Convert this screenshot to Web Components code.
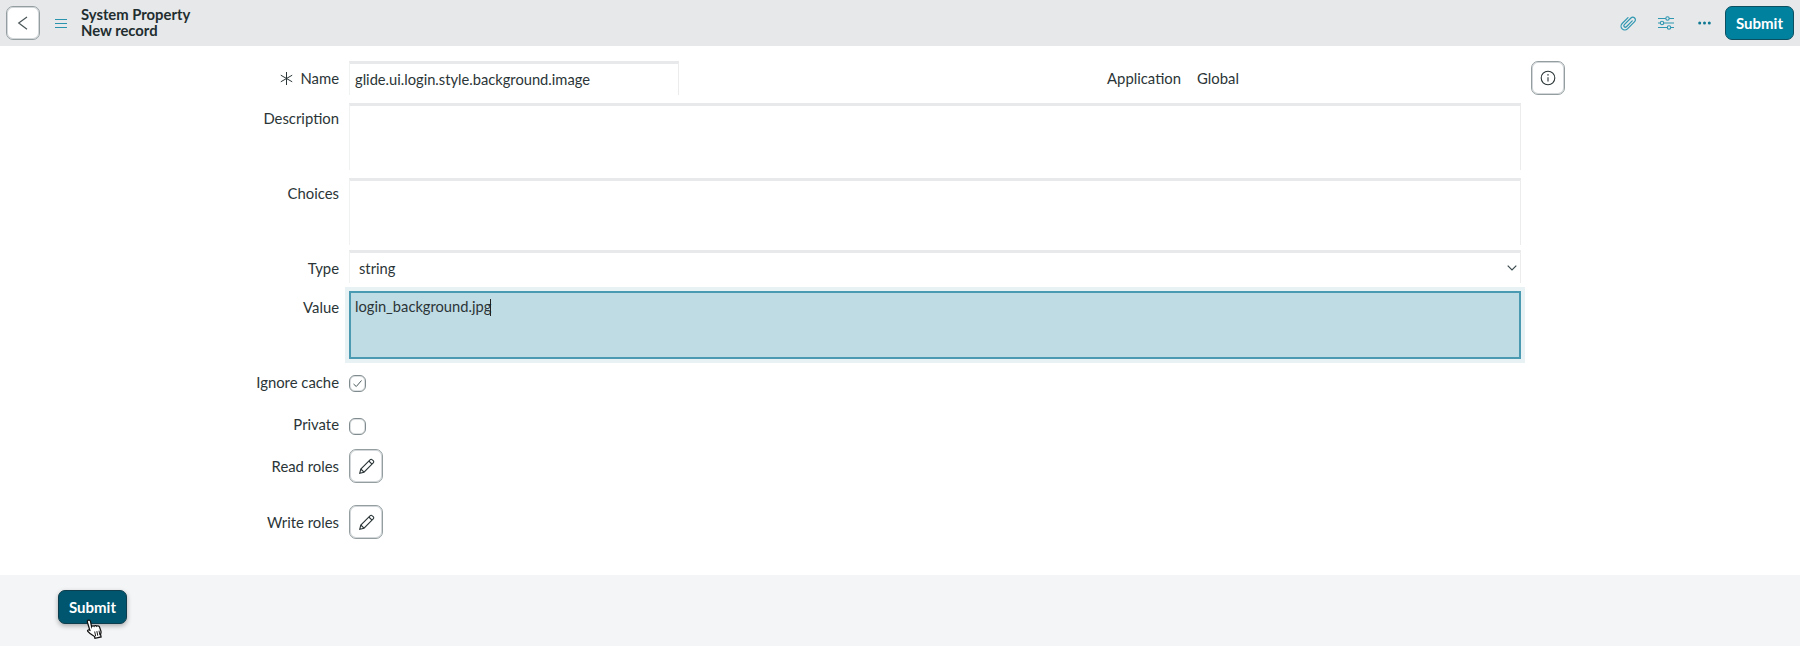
<!DOCTYPE html>
<html>
<head>
<meta charset="utf-8">
<title>System Property</title>
<style>
  html, body { margin: 0; height: 100%; }
  body { font-family: Lato, "Open Sans", sans-serif; font-size: 14.850px; color: #2b3537; background: #fff; overflow: hidden; }
  sn-page { height: 646px; }
</style>
</head>
<body>
<template id="icon-btn-tpl">
  <style>
    :host { display: inline-flex; width: 34px; height: 34px; box-sizing: border-box; border: 1px solid #949ea1; box-shadow: inset 0 0 0 1px #d3d7d9; border-radius: 7px; background: #fff; align-items: center; justify-content: center; }
    ::slotted(svg) { display: block; }
  </style>
  <slot></slot>
</template>

<template id="submit-tpl">
  <style>
    :host { display: inline-flex; box-sizing: border-box; width: 69px; height: 34px; align-items: center; justify-content: center; border-radius: 7px; font-weight: 700; font-size: 15px; color: #fff; background: var(--btn-bg, #00829f); border: 1px solid var(--btn-border, #0b4f61); box-shadow: var(--btn-shadow, none); }
  </style>
  <slot></slot>
</template>

<template id="header-tpl">
  <style>
    :host { display: flex; height: 46px; box-sizing: border-box; background: #e6e8ea; align-items: center; padding: 0 6px; }
    .titles { margin-left: 14px; margin-top: -2px; font-weight: 700; font-size: 14.800px; line-height: 16px; color: #222d2f; }
    .menu { margin-left: 15px; width: 12px; display: flex; }
    .actions { margin-left: auto; display: flex; align-items: center; }
    .act { display: flex; width: 38px; justify-content: center; color: #2f97b1; }
    .dots { color: #0f7893; margin-right: 2px; }
  </style>
  <sn-icon-btn>
    <svg width="16" height="18" viewBox="0 0 16 18" fill="none" stroke="#4a5558" stroke-width="1.200"><path d="M12 3 3.700 9.100 12 15.300"/></svg>
  </sn-icon-btn>
  <div class="menu">
    <svg width="12" height="9" viewBox="0 0 12 9" stroke="#2a93ad" stroke-width="1"><path d="M0 .5h12M0 4.500h12M0 8.500h12"/></svg>
  </div>
  <div class="titles"><div>System Property</div><div>New record</div></div>
  <div class="actions">
    <span class="act">
      <svg width="18" height="18" viewBox="0 0 24 24" fill="none" stroke="currentColor" stroke-width="1.600" stroke-linecap="round"><path transform="rotate(45 12 12) translate(5 0)" d="M9 6v11a2 2 0 0 1-4 0V4.500a3.500 3.500 0 0 1 7 0V18a5 5 0 0 1-10 0V7"/></svg>
    </span>
    <span class="act">
      <svg width="16" height="14" viewBox="0 0 16 14" fill="#e6e8ea" stroke="currentColor" stroke-width="1.100"><path d="M0 2.500h16M0 7h16M0 11.500h16"/><circle cx="9.500" cy="2.500" r="1.700"/><circle cx="4" cy="7" r="1.700"/><circle cx="11" cy="11.500" r="1.700"/></svg>
    </span>
    <span class="act dots">
      <svg width="13" height="4" viewBox="0 0 13 4" fill="currentColor"><circle cx="1.700" cy="2" r="1.500"/><circle cx="6.500" cy="2" r="1.500"/><circle cx="11.300" cy="2" r="1.500"/></svg>
    </span>
    <sn-submit>Submit</sn-submit>
  </div>
</template>

<template id="row-tpl">
  <style>
    :host { display: grid; grid-template-columns: 339px 1172px; column-gap: 10px; align-items: start; }
    .label { line-height: 18px; padding-top: var(--label-top, 8px); white-space: nowrap; display: flex; justify-content: flex-end; align-items: center; gap: 7px; }
    .field { min-width: 0; }
  </style>
  <div class="label"><slot name="mark"></slot><span id="t"></span></div>
  <div class="field"><slot></slot></div>
</template>

<template id="box-tpl">
  <style>
    :host { display: block; box-sizing: border-box; border-top: 3px solid #e8e9ea; border-left: 1px solid #f0f1f1; border-right: 1px solid #ececed; background: #fff; padding: 2px 5px; font-size: 14.700px; }
  </style>
  <slot></slot>
</template>

<template id="form-tpl">
  <style>
    :host { display: block; flex: 1; position: relative; }
    .wrap { padding-top: 15px; }
  </style>
  <div class="wrap"><slot></slot></div>
</template>

<template id="footer-tpl">
  <style>
    :host { display: flex; height: 71px; box-sizing: border-box; background: #f4f5f7; padding: 15px 0 0 58px; align-items: flex-start; position: relative; }
    sn-submit { --btn-bg: #00566e; --btn-border: #0e3e4d; --btn-shadow: 0 2px 5px rgba(0,0,0,.3); }
    svg { position: absolute; left: 86px; top: 43px; }
  </style>
  <sn-submit>Submit</sn-submit>
  <svg width="18" height="21" viewBox="0 0 18 22">
    <g transform="rotate(-12 9 11)">
      <path d="M4.200 1c1.100 0 1.700.8 1.700 1.800v5.500c.3-.5 2.400-.6 2.700.2.500-.5 2.300-.4 2.600.5.700-.5 2.500-.2 2.700 1.200l.6 4.500c.1 1.400-.4 2.500-1.100 3.500v2.800H6.800v-1.900C5.400 18 1.600 13.800 1 12.500c-.5-1.100.7-2.300 2.300-1l-.7-8.600C2.500 1.800 3.200 1 4.200 1z" fill="#fff" stroke="#111" stroke-width="1.300"/>
      <path d="M8 14v5M10.300 14v5M12.600 14v5" stroke="#111" stroke-width="1"/>
    </g>
  </svg>
</template>

<script>
  function shadowFrom(el, id) {
    el.attachShadow({mode: 'open'});
    el.shadowRoot.appendChild(document.getElementById(id).content.cloneNode(true));
  }

  class SnIconBtn extends HTMLElement {
    constructor() { super(); shadowFrom(this, 'icon-btn-tpl'); }
  }
  class SnSubmit extends HTMLElement {
    constructor() { super(); shadowFrom(this, 'submit-tpl'); }
  }
  class SnHeader extends HTMLElement {
    constructor() { super(); shadowFrom(this, 'header-tpl'); }
  }
  class SnBox extends HTMLElement {
    constructor() { super(); shadowFrom(this, 'box-tpl'); }
  }
  class SnRow extends HTMLElement {
    constructor() { super(); shadowFrom(this, 'row-tpl'); }
    connectedCallback() {
      this.shadowRoot.getElementById('t').textContent = this.getAttribute('label');
    }
  }
  class SnForm extends HTMLElement {
    constructor() { super(); shadowFrom(this, 'form-tpl'); }
  }
  class SnFooter extends HTMLElement {
    constructor() { super(); shadowFrom(this, 'footer-tpl'); }
  }
  class SnPage extends HTMLElement {
    constructor() {
      super();
      this.attachShadow({mode: 'open'});
      this.shadowRoot.innerHTML = `
      <style>
        :host { display: flex; flex-direction: column; }
      </style>
      <slot></slot>`;
    }
  }

  customElements.define('sn-icon-btn', SnIconBtn);
  customElements.define('sn-submit', SnSubmit);
  customElements.define('sn-header', SnHeader);
  customElements.define('sn-box', SnBox);
  customElements.define('sn-row', SnRow);
  customElements.define('sn-form', SnForm);
  customElements.define('sn-footer', SnFooter);
  customElements.define('sn-page', SnPage);
</script>

<style>
  .name-line { display: flex; align-items: center; }
  .name-box { width: 330px; height: 34px; line-height: 27px; }
  .app { display: flex; width: 842px; }
  .app-label { width: 502px; text-align: right; }
  .app-value { margin-left: 16px; }
  .info { position: absolute; left: 1531px; top: 15px; }
  .area { height: 67px; margin-top: 8px; }
  .type-box { height: 33px; margin-top: 5px; padding: 0 0 0 9px; line-height: 30px; display: flex; justify-content: space-between; align-items: center; }
  .type-box svg { margin-right: 3px; }
  .value-wrap { margin: 4px -4px 0; padding: 4px; background: #e8f1f4; height: 76px; box-sizing: border-box; }
  .value { box-sizing: border-box; height: 68px; border: 2px solid #4a9bb1; background: #bfdbe4; padding: 4px 4px; line-height: 18px; font-size: 14.700px; }
  .caret { display: inline-block; width: 1px; height: 17px; margin-left: -1px; background: #222; vertical-align: -4px; }
  .check { width: 17px; height: 17px; border: 1px solid #7f8b8e; box-shadow: inset 0 0 0 1px #dde0e1; border-radius: 6px; box-sizing: border-box; display: block; }
  .check svg { display: block; }
  .p12 { padding-top: 12px; }
  .p26 { padding-top: 26px; }
  .p14 { padding-top: 14px; }
  .p22 { padding-top: 22px; }
</style>

<sn-page>
  <sn-header></sn-header>
  <sn-form>
    <sn-row label="Name">
      <svg slot="mark" width="13" height="13" viewBox="0 0 13 13" stroke="#2b3537" stroke-width="1"><path d="M6.500 0v13M.8 3.200l11.400 6.600M12.200 3.200.8 9.800"/></svg>
      <div class="name-line">
        <sn-box class="name-box">glide.ui.login.style.background.image</sn-box>
        <div class="app"><span class="app-label">Application</span><span class="app-value">Global</span></div>
      </div>
    </sn-row>
    <sn-icon-btn class="info">
      <svg width="16" height="16" viewBox="0 0 16 16" fill="none" stroke="#2b3537" stroke-width="1.100"><circle cx="8" cy="8" r="6.800"/><path d="M8 7.200v4.300"/><path d="M8 4.200v1.200" stroke-width="1.400"/></svg>
    </sn-icon-btn>
    <sn-row label="Description" style="--label-top:14px"><sn-box class="area"></sn-box></sn-row>
    <sn-row label="Choices" style="--label-top:14px"><sn-box class="area"></sn-box></sn-row>
    <sn-row label="Type" style="--label-top:14px">
      <sn-box class="type-box">string
        <svg width="10" height="6" viewBox="0 0 10 6" fill="none" stroke="#3b4a4d" stroke-width="1.200"><path d="M.7.700 5 5l4.300-4.300"/></svg>
      </sn-box>
    </sn-row>
    <sn-row label="Value" style="--label-top:15px">
      <div class="value-wrap"><div class="value">login_background.jpg<span class="caret"></span></div></div>
    </sn-row>
    <sn-row label="Ignore cache" style="--label-top:10px">
      <div class="p12">
        <div class="check"><svg width="15" height="15" viewBox="0 0 15 15" fill="none" stroke="#4b5a5d" stroke-width="1"><path d="M3.500 8 6.300 10.500 11.500 4.500"/></svg></div>
      </div>
    </sn-row>
    <sn-row label="Private" style="--label-top:23px">
      <div class="p26"><div class="check"></div></div>
    </sn-row>
    <sn-row label="Read roles" style="--label-top:22px">
      <div class="p14"><sn-icon-btn><svg width="17" height="17" viewBox="0 0 17 17" fill="none" stroke="#2b3537" stroke-width="1.100"><path d="M1.700 15.300 2.800 11 12 1.800c.7-.7 1.700-.7 2.300 0l.9.900c.6.600.6 1.600 0 2.300L6 14.200z"/><path d="M2.800 11 6 14.200M10.800 3l3.200 3.200"/></svg></sn-icon-btn></div>
    </sn-row>
    <sn-row label="Write roles" style="--label-top:30px">
      <div class="p22"><sn-icon-btn><svg width="17" height="17" viewBox="0 0 17 17" fill="none" stroke="#2b3537" stroke-width="1.100"><path d="M1.700 15.300 2.800 11 12 1.800c.7-.7 1.700-.7 2.300 0l.9.900c.6.600.6 1.600 0 2.300L6 14.200z"/><path d="M2.800 11 6 14.200M10.800 3l3.200 3.200"/></svg></sn-icon-btn></div>
    </sn-row>
  </sn-form>
  <sn-footer></sn-footer>
</sn-page>
</body>
</html>
